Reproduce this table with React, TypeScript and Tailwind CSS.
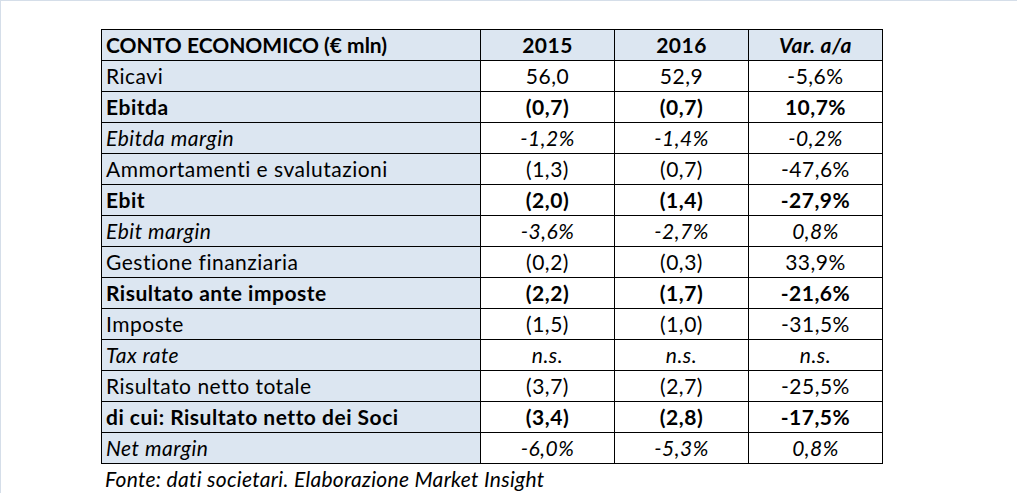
import React from "react";

type Row = {
  label: string;
  y2015: string;
  y2016: string;
  change: string;
  style?: "bold" | "italic";
};

const rows: Row[] = [
  { label: "Ricavi", y2015: "56,0", y2016: "52,9", change: "-5,6%" },
  { label: "Ebitda", y2015: "(0,7)", y2016: "(0,7)", change: "10,7%", style: "bold" },
  { label: "Ebitda margin", y2015: "-1,2%", y2016: "-1,4%", change: "-0,2%", style: "italic" },
  { label: "Ammortamenti e svalutazioni", y2015: "(1,3)", y2016: "(0,7)", change: "-47,6%" },
  { label: "Ebit", y2015: "(2,0)", y2016: "(1,4)", change: "-27,9%", style: "bold" },
  { label: "Ebit margin", y2015: "-3,6%", y2016: "-2,7%", change: "0,8%", style: "italic" },
  { label: "Gestione finanziaria", y2015: "(0,2)", y2016: "(0,3)", change: "33,9%" },
  { label: "Risultato ante imposte", y2015: "(2,2)", y2016: "(1,7)", change: "-21,6%", style: "bold" },
  { label: "Imposte", y2015: "(1,5)", y2016: "(1,0)", change: "-31,5%" },
  { label: "Tax rate", y2015: "n.s.", y2016: "n.s.", change: "n.s.", style: "italic" },
  { label: "Risultato netto totale", y2015: "(3,7)", y2016: "(2,7)", change: "-25,5%" },
  { label: "di cui: Risultato netto dei Soci", y2015: "(3,4)", y2016: "(2,8)", change: "-17,5%", style: "bold" },
  { label: "Net margin", y2015: "-6,0%", y2016: "-5,3%", change: "0,8%", style: "italic" },
];

const fontFor = (style?: Row["style"]) =>
  style === "bold"
    ? "font-bold tracking-[0.5px]"
    : style === "italic"
      ? "italic tracking-[0.5px]"
      : "font-normal tracking-[0.5px]";

export default function App() {
  return (
    <div
      className="w-[1017px] h-[493px] bg-white border-t border-l border-[#d5dee9] pt-[28px] pl-[100px] text-[21px] text-black [font-variant-ligatures:none]"
      style={{ fontFamily: "Lato, 'Liberation Sans', sans-serif" }}
    >
      {/* Table */}
      <div className="grid grid-cols-[379px_134px_134px_134px] w-[782px] border-t border-l border-black">
        {/* Header */}
        <div className="h-[31px] flex items-center pl-[4px] bg-[#dce6f1] border-r border-b border-black font-bold">
          CONTO ECONOMICO (€ mln)
        </div>
        <div className="h-[31px] flex items-center justify-center bg-[#dce6f1] border-r border-b border-black font-bold tracking-[0.5px]">
          2015
        </div>
        <div className="h-[31px] flex items-center justify-center bg-[#dce6f1] border-r border-b border-black font-bold tracking-[0.5px]">
          2016
        </div>
        <div className="h-[31px] flex items-center justify-center bg-[#dce6f1] border-r border-b border-black font-bold italic tracking-[0.5px]">
          Var. a/a
        </div>

        {rows.map((row) => (
          <React.Fragment key={row.label}>
            <div
              className={`h-[31px] flex items-center pl-[4px] bg-[#dce6f1] border-r border-b border-black ${fontFor(row.style)}`}
            >
              {row.label}
            </div>
            <div
              className={`h-[31px] flex items-center justify-center border-r border-b border-black ${fontFor(row.style)}`}
            >
              {row.y2015}
            </div>
            <div
              className={`h-[31px] flex items-center justify-center border-r border-b border-black ${fontFor(row.style)}`}
            >
              {row.y2016}
            </div>
            <div
              className={`h-[31px] flex items-center justify-center border-r border-b border-black ${fontFor(row.style)}`}
            >
              {row.change}
            </div>
          </React.Fragment>
        ))}
      </div>

      {/* Source note */}
      <div className="pl-[4px] leading-[30px] italic tracking-[0.3px]">
        Fonte: dati societari. Elaborazione Market Insight
      </div>
    </div>
  );
}
